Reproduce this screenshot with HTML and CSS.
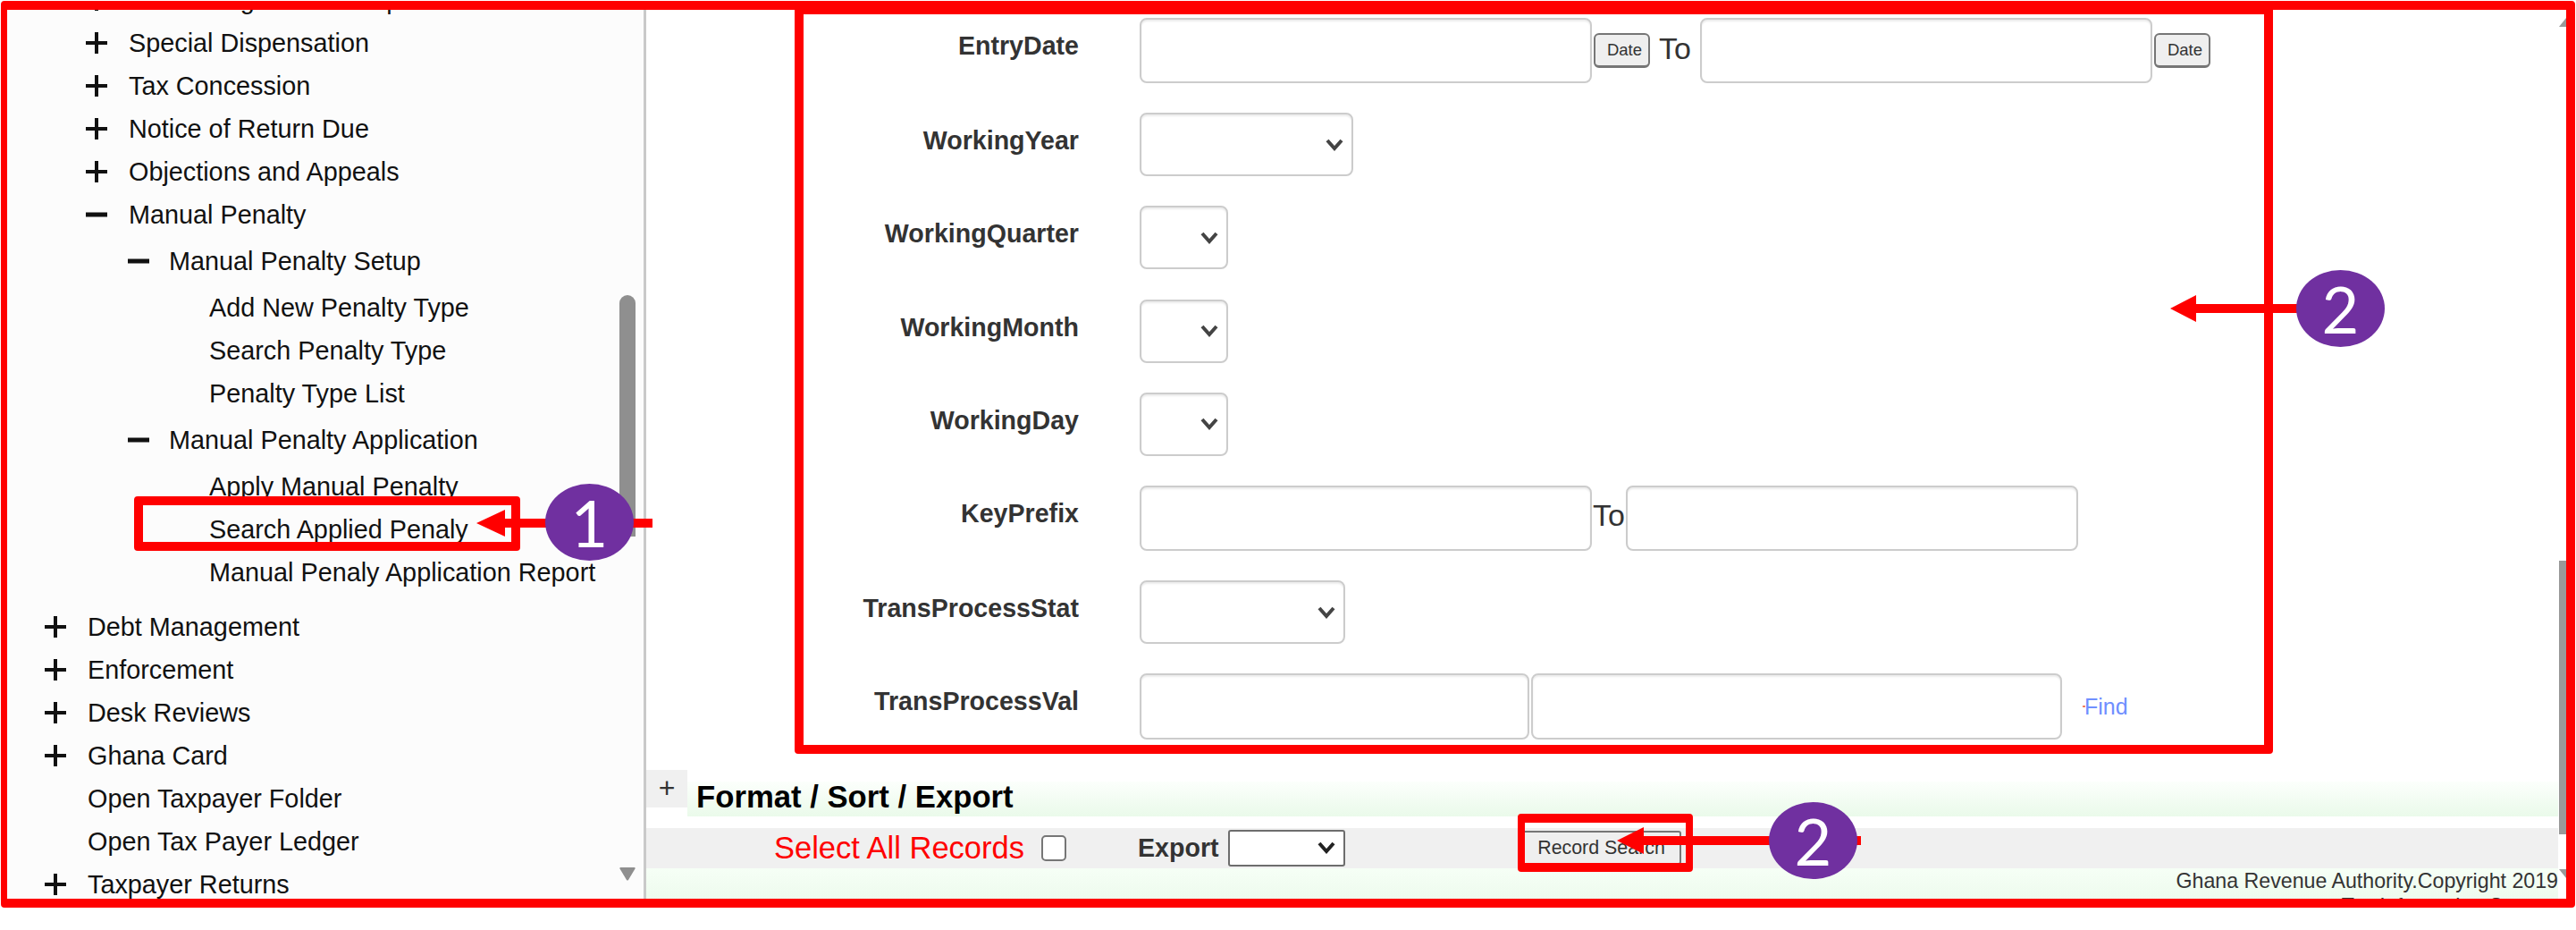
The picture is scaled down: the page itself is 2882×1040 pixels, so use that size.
FILE: index.html
```html
<!DOCTYPE html>
<html lang="en">
<head>
    <meta charset="UTF-8">
    <title>Search Applied Penalty</title>
    <link rel="stylesheet" href="styles.css">
</head>
<body>
    <div class="screen">
        <div class="app">
            <aside class="sidebar">
                <ul class="tree">
                    <li class="tree-row lvl-1"><svg class="tree-icon" viewBox="0 0 24 24"><path d="M12 0v24M0 12h24"/></svg>Tax Management Setup</li>
                    <li class="tree-row lvl-1"><svg class="tree-icon" viewBox="0 0 24 24"><path d="M12 0v24M0 12h24"/></svg>Special Dispensation</li>
                    <li class="tree-row lvl-1"><svg class="tree-icon" viewBox="0 0 24 24"><path d="M12 0v24M0 12h24"/></svg>Tax Concession</li>
                    <li class="tree-row lvl-1"><svg class="tree-icon" viewBox="0 0 24 24"><path d="M12 0v24M0 12h24"/></svg>Notice of Return Due</li>
                    <li class="tree-row lvl-1"><svg class="tree-icon" viewBox="0 0 24 24"><path d="M12 0v24M0 12h24"/></svg>Objections and Appeals</li>
                    <li class="tree-row lvl-1"><svg class="tree-icon" viewBox="0 0 24 24"><path class="minus" d="M0 12h24"/></svg>Manual Penalty</li>
                    <li class="tree-row lvl-2 gap-top"><svg class="tree-icon" viewBox="0 0 24 24"><path class="minus" d="M0 12h24"/></svg>Manual Penalty Setup</li>
                    <li class="tree-row lvl-3 gap-top">Add New Penalty Type</li>
                    <li class="tree-row lvl-3">Search Penalty Type</li>
                    <li class="tree-row lvl-3">Penalty Type List</li>
                    <li class="tree-row lvl-2 gap-top"><svg class="tree-icon" viewBox="0 0 24 24"><path class="minus" d="M0 12h24"/></svg>Manual Penalty Application</li>
                    <li class="tree-row lvl-3 gap-small">Apply Manual Penalty</li>
                    <li class="tree-row lvl-3">Search Applied Penaly</li>
                    <li class="tree-row lvl-3">Manual Penaly Application Report</li>
                    <li class="tree-row lvl-0 gap-group"><svg class="tree-icon" viewBox="0 0 24 24"><path d="M12 0v24M0 12h24"/></svg>Debt Management</li>
                    <li class="tree-row lvl-0"><svg class="tree-icon" viewBox="0 0 24 24"><path d="M12 0v24M0 12h24"/></svg>Enforcement</li>
                    <li class="tree-row lvl-0"><svg class="tree-icon" viewBox="0 0 24 24"><path d="M12 0v24M0 12h24"/></svg>Desk Reviews</li>
                    <li class="tree-row lvl-0"><svg class="tree-icon" viewBox="0 0 24 24"><path d="M12 0v24M0 12h24"/></svg>Ghana Card</li>
                    <li class="tree-row leaf">Open Taxpayer Folder</li>
                    <li class="tree-row leaf">Open Tax Payer Ledger</li>
                    <li class="tree-row lvl-0"><svg class="tree-icon" viewBox="0 0 24 24"><path d="M12 0v24M0 12h24"/></svg>Taxpayer Returns</li>
                </ul>
                <div class="side-thumb"></div>
                <svg class="side-arrow" viewBox="0 0 18 15"><path d="M1 0h16q1 0 .5 1.500L10 14q-1 1-2 0L.5 1.500Q0 0 1 0z"/></svg>
            </aside>

            <main class="content">
                <form class="search-form">
                    <div class="form-row">
                        <label class="form-label">EntryDate</label>
                        <div class="field">
                            <input class="text-input wide" type="text">
                            <button class="date-btn" type="button">Date</button>
                            <span class="to-text to-after-btn">To</span>
                            <input class="text-input wide" type="text">
                            <button class="date-btn" type="button">Date</button>
                        </div>
                    </div>
                    <div class="form-row">
                        <label class="form-label">WorkingYear</label>
                        <div class="field"><select class="select-input year"></select></div>
                    </div>
                    <div class="form-row">
                        <label class="form-label">WorkingQuarter</label>
                        <div class="field"><select class="select-input tiny"></select></div>
                    </div>
                    <div class="form-row">
                        <label class="form-label">WorkingMonth</label>
                        <div class="field"><select class="select-input tiny"></select></div>
                    </div>
                    <div class="form-row">
                        <label class="form-label">WorkingDay</label>
                        <div class="field"><select class="select-input tiny"></select></div>
                    </div>
                    <div class="form-row">
                        <label class="form-label">KeyPrefix</label>
                        <div class="field">
                            <input class="text-input wide" type="text">
                            <span class="to-text">To</span>
                            <input class="text-input wide" type="text">
                        </div>
                    </div>
                    <div class="form-row">
                        <label class="form-label">TransProcessStat</label>
                        <div class="field"><select class="select-input stat"></select></div>
                    </div>
                    <div class="form-row">
                        <label class="form-label">TransProcessVal</label>
                        <div class="field">
                            <input class="text-input val-from" type="text">
                            <input class="text-input val-to" type="text">
                            <a class="find-link">Find</a>
                        </div>
                    </div>
                </form>

                <div class="section-head">
                    <div class="toggle-box">+</div>
                    <h2 class="section-title">Format / Sort / Export</h2>
                </div>

                <div class="export-row">
                    <span class="select-all">Select All Records</span>
                    <input class="check" type="checkbox">
                    <span class="export-label">Export</span>
                    <select class="export-select"></select>
                    <button class="record-btn" type="button">Record Search</button>
                </div>

                <footer class="page-foot">
                    Ghana Revenue Authority.Copyright 2019<br>
                    Tax Information System
                </footer>

                <div class="page-arrow-up"></div>
                <div class="page-thumb"></div>
                <div class="page-arrow-down"></div>
            </main>
        </div>

        <!-- red marks drawn over the screenshot -->
        <div class="frame"></div>
        <div class="mark-box form-box"></div>
        <div class="mark-box menu-box"></div>
        <div class="mark-box record-box"></div>

        <svg class="arrow arrow-menu" viewBox="0 0 197 30"><path d="M0 15L32 0V10H197V20H32V30Z"/></svg>
        <svg class="arrow arrow-form" viewBox="0 0 147 30"><path d="M0 15L29 0V10H147V20H29V30Z"/></svg>
        <svg class="arrow arrow-record" viewBox="0 0 273 30"><path d="M0 15L30 0V10H273V20H30V30Z"/></svg>

        <div class="badge badge-menu">1</div>
        <div class="badge badge-form">2</div>
        <div class="badge badge-record">2</div>
    </div>
</body>
</html>
```

FILE: styles.css
```css
*, *::before, *::after {
    box-sizing: border-box;
}

body {
    margin: 0;
    background-color: #fff;
    font-family: "Liberation Sans", Arial, sans-serif;
    color: #333;
}

.screen {
    position: relative;
    width: 2882px;
    height: 1040px;
    overflow: hidden;
}

.app {
    display: flex;
    height: 1008px;
    overflow: hidden;
    clip-path: inset(1px 0 0 0);
}

/* left menu */
.sidebar {
    position: relative;
    flex: none;
    width: 723px;
    overflow: hidden;
    background-color: #fcfcfc;
    border-right: 3px solid #c9c9c9;
}

.tree {
    margin: -24px 0 0;
    padding: 0;
    list-style: none;
    font-size: 28.8px;
    color: #111;
}

.tree-row {
    display: flex;
    align-items: center;
    height: 48px;
    white-space: nowrap;
}

.tree-icon {
    flex: none;
    width: 24px;
    height: 24px;
    margin-right: 24px;
    fill: none;
    stroke: #111;
    stroke-width: 4;
}

.tree-icon .minus {
    stroke-width: 5;
}

.lvl-0 { padding-left: 50px; }
.lvl-1 { padding-left: 96px; }
.lvl-2 { padding-left: 143px; }
.lvl-2 .tree-icon { margin-right: 22px; }
.lvl-3 { padding-left: 234px; }
.leaf { padding-left: 98px; }

.gap-top { margin-top: 4px; }
.gap-small { margin-top: 4px; }
.gap-group { margin-top: 13px; }

.side-thumb {
    position: absolute;
    top: 330px;
    left: 693px;
    width: 18px;
    height: 270px;
    border-radius: 9px 9px 0 0;
    background-color: #8f8f8f;
}

.side-arrow {
    position: absolute;
    top: 970px;
    left: 693px;
    width: 18px;
    height: 15px;
    fill: #8f8f8f;
}

/* right side */
.content {
    position: relative;
    flex: 1;
    min-width: 0;
    padding-right: 20px;
    background-color: #fff;
}

.search-form {
    padding-top: 20px;
}

.form-row {
    display: flex;
    align-items: flex-start;
    gap: 68px;
    margin-bottom: 33.2px;
}

.form-label {
    flex: none;
    width: 484px;
    padding-top: 14px;
    line-height: 34px;
    font-size: 28.6px;
    font-weight: bold;
    text-align: right;
    color: #333;
}

.field {
    display: flex;
    align-items: center;
}

.text-input {
    height: 73px;
    padding: 0 12px;
    background-color: #fff;
    border: 2px solid #ccc;
    border-radius: 8px;
    box-shadow: inset 0 2px 2px rgba(0, 0, 0, .08);
}

.text-input.wide { width: 506px; }
.text-input.val-from { width: 436px; height: 74px; }
.text-input.val-to { width: 594px; height: 74px; margin-left: 2px; }

.date-btn {
    width: 63px;
    height: 39px;
    margin-left: 2px;
    padding: 0 0 0 6px;
    font: 18.500px "Liberation Sans", Arial, sans-serif;
    color: #333;
    background-color: #efefef;
    border: 2px solid #767676;
    border-bottom-width: 3px;
    border-radius: 6px;
}

.to-text {
    width: 38px;
    margin-top: -5px;
    font-size: 34px;
    text-align: center;
    color: #333;
}

.to-after-btn {
    width: 36px;
    margin: -5px 10px 0 10px;
}

.select-input {
    height: 71px;
    padding: 0 12px;
    background-color: #fff;
    background-image: url("data:image/svg+xml,%3Csvg xmlns='http://www.w3.org/2000/svg' viewBox='0 0 20 14'%3E%3Cpath d='M2 2l8 9 8-9' fill='none' stroke='%23444' stroke-width='4'/%3E%3C/svg%3E");
    background-repeat: no-repeat;
    background-position: right 9px center;
    background-size: 20px 14px;
    border: 2px solid #ccc;
    border-radius: 8px;
    box-shadow: inset 0 2px 2px rgba(0, 0, 0, .08);
    appearance: none;
}

.select-input.year { width: 239px; }
.select-input.tiny { width: 99px; }
.select-input.stat { width: 230px; }

.find-link {
    position: relative;
    margin-left: 25px;
    font-size: 25px;
    color: #6f8fff;
}

.find-link::before {
    content: "";
    position: absolute;
    top: 13px;
    left: -2px;
    width: 3px;
    height: 2px;
    background-color: #f08060;
}

.section-head {
    display: flex;
    align-items: flex-start;
    height: 52px;
}

.toggle-box {
    flex: none;
    width: 46px;
    height: 42px;
    font-size: 32px;
    line-height: 40px;
    text-align: center;
    background-color: #f0f0f0;
}

.section-title {
    flex: 1;
    height: 39px;
    margin: 13px 0 0;
    padding-left: 10px;
    line-height: 35px;
    font-size: 34.7px;
    font-weight: bold;
    color: #000;
    background: linear-gradient(#fcfffc, #eafaea);
}

.export-row {
    display: flex;
    align-items: center;
    height: 45px;
    margin-top: 13px;
    padding-left: 143px;
    background-color: #f0f0f0;
}

.select-all {
    font-size: 34.5px;
    color: #f00;
}

.check {
    width: 28px;
    height: 29px;
    margin: 0 80px 0 19px;
    background-color: #fff;
    border: 2px solid #767676;
    border-radius: 5px;
    appearance: none;
}

.export-label {
    font-size: 28.6px;
    font-weight: bold;
}

.export-select {
    width: 131px;
    height: 41px;
    margin: 0 198px 0 10px;
    background-color: #fff;
    background-image: url("data:image/svg+xml,%3Csvg xmlns='http://www.w3.org/2000/svg' viewBox='0 0 20 14'%3E%3Cpath d='M2 2l8 9 8-9' fill='none' stroke='%23222' stroke-width='4'/%3E%3C/svg%3E");
    background-repeat: no-repeat;
    background-position: right 9px center;
    background-size: 20px 14px;
    border: 2px solid #6d6d6d;
    border-radius: 3px;
    appearance: none;
}

.record-btn {
    width: 178px;
    height: 38px;
    padding: 0;
    font: 21.400px "Liberation Sans", Arial, sans-serif;
    color: #333;
    background-color: #efefef;
    border: 2px solid #767676;
    border-radius: 3px;
}

.page-foot {
    height: 40px;
    overflow: hidden;
    font-size: 23.2px;
    line-height: 28px;
    text-align: right;
    color: #333;
    background: linear-gradient(#f6fff6, #ecfaec);
}

.page-thumb {
    position: absolute;
    top: 627px;
    right: 11px;
    width: 8px;
    height: 306px;
    background-color: #999;
}

.page-arrow-up,
.page-arrow-down {
    position: absolute;
    right: 11px;
    width: 8px;
    height: 10px;
    background-color: #999;
}

.page-arrow-up { top: 20px; clip-path: polygon(100% 0, 100% 100%, 0 100%); }
.page-arrow-down { top: 972px; clip-path: polygon(0 0, 100% 0, 100% 100%); }

/* annotations */
.frame,
.mark-box,
.arrow,
.badge {
    position: absolute;
}

.frame {
    top: 1px;
    left: 1px;
    width: 2880px;
    height: 1014px;
    border: 10px solid #f00;
    border-left-width: 7px;
    border-radius: 4px;
}

.mark-box {
    border: 10px solid #f00;
    border-radius: 4px;
}

.form-box {
    top: 6px;
    left: 889px;
    width: 1654px;
    height: 837px;
}

.menu-box {
    top: 555px;
    left: 150px;
    width: 432px;
    height: 61px;
}

.record-box {
    top: 910px;
    left: 1698px;
    width: 196px;
    height: 65px;
    border-left-width: 8px;
    border-right-width: 8px;
}

.arrow {
    height: 30px;
    fill: #f00;
}

.arrow-menu { top: 570px; left: 533px; width: 197px; }
.arrow-form { top: 330px; left: 2428px; width: 147px; }
.arrow-record { top: 925px; left: 1809px; width: 273px; }

.badge {
    display: flex;
    align-items: center;
    justify-content: center;
    width: 99px;
    height: 86px;
    border-radius: 50%;
    font-family: Lato, sans-serif;
    font-size: 72px;
    color: #fff;
    background-color: #7030a0;
}

.badge-menu { top: 541px; left: 610px; }
.badge-form { top: 302px; left: 2569px; }
.badge-record { top: 897px; left: 1979px; }
```
